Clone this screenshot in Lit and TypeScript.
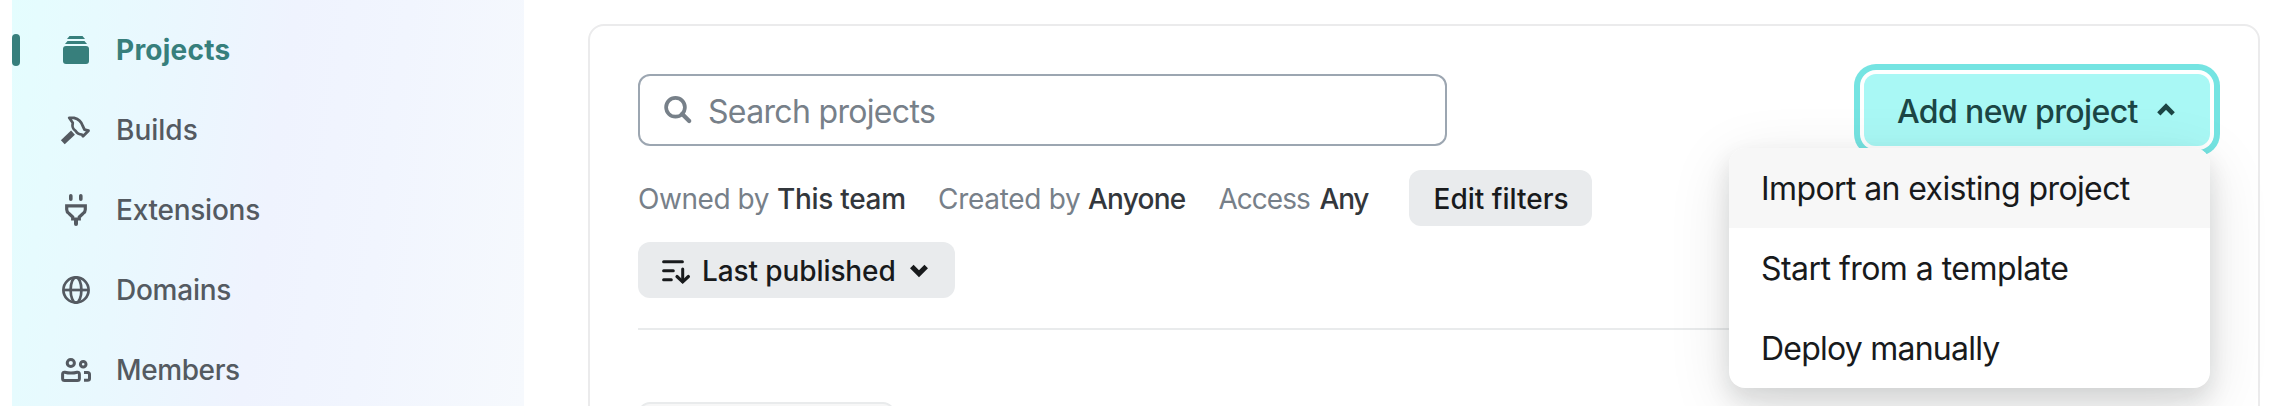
import { LitElement, html, css, svg } from "lit";
import { customElement } from "lit/decorators.js";
import { classMap } from "lit/directives/class-map.js";

const icons = {
  projects: svg`<g fill="currentColor"><path d="M9.500 2h13l2.500 3H7z"/><path d="M7.500 7h17l2.500 3H5z"/><rect x="3" y="12" width="26" height="18" rx="3"/></g>`,
  builds: svg`<path d="M2.800 28.200L13 18.600" stroke="currentColor" stroke-width="5.600"/><path d="M9.200 3.800H14c5 1.400 7.600 4.400 8.600 7.900l1.900 4 4 1-5.500 5.500-1.100-1.600c-3 0-5-1.500-6.300-3.700-3.200-2-3.500-4-2.900-8.200z" fill="none" stroke="currentColor" stroke-width="2.800" stroke-linejoin="round"/>`,
  extensions: svg`<g fill="none" stroke="currentColor"><path d="M10.800 1.800V5.200M20.800 1.800V5.200" stroke-width="3.600" stroke-linecap="round"/><path d="M6.700 11.800H25.300V15.500Q25.300 18 23 19.500L19.300 23V25H12.700V23L9 19.500Q6.700 18 6.700 15.500z" stroke-width="3.200"/><path d="M16 26V30" stroke-width="4" stroke-linecap="round"/></g>`,
  domains: svg`<g fill="none" stroke="currentColor" stroke-width="2.700"><circle cx="16" cy="16" r="12.600"/><ellipse cx="16" cy="16" rx="5.400" ry="12.600"/><path d="M3.400 16h25.200"/></g>`,
  members: svg`<g fill="none" stroke="currentColor" stroke-width="3"><circle cx="10.800" cy="9" r="3.600"/><circle cx="23.200" cy="10.300" r="2.800"/><path d="M4.800 18.200Q11 19.800 17.200 18.200Q19.400 17.900 19.400 20.200V24.500Q19.400 26.500 17.400 26.500H4.600Q2.600 26.500 2.600 24.500V20.200Q2.600 17.900 4.800 18.200z"/><path d="M24 18.600h3.500q2 0 2 2v3.900q0 1.800-2 1.800H24"/></g>`,
};

const nav = [
  { label: "Projects", icon: icons.projects, cls: "projects" },
  { label: "Builds", icon: icons.builds, cls: "builds" },
  { label: "Extensions", icon: icons.extensions, cls: "extensions" },
  { label: "Domains", icon: icons.domains, cls: "domains" },
  { label: "Members", icon: icons.members, cls: "members" },
];

@customElement("side-nav")
class SideNav extends LitElement {
  static styles = css`
    :host {
      display: block;
      box-sizing: border-box;
      height: 406px;
      padding-top: 10px;
      background: linear-gradient(98deg, #e4fdfe 0%, #e9f8fe 25%, #eff3fe 50%, #f1f5fe 70%, #f6f9fd 100%);
    }
    .item {
      display: flex;
      align-items: center;
      height: 80px;
      color: #545a61;
      font-size: 28px;
      font-weight: 500;
      line-height: 40px;
    }
    .bar { width: 8px; height: 32px; border-radius: 4px; margin-right: 40px; }
    .icon { width: 32px; height: 32px; margin-right: 24px; overflow: visible; }
    .active { color: #377f7c; font-weight: 700; }
    .active .bar { background: #377f7c; }
    .projects { letter-spacing: 0.25px; }
    .extensions, .domains { letter-spacing: -0.25px; }
    .members { letter-spacing: -0.4px; }
  `;
  render() {
    return nav.map(
      (n, i) => html`<div class=${classMap({ item: true, active: i === 0, [n.cls]: true })}>
        <span class="bar"></span>
        <svg class="icon" viewBox="0 0 32 32">${n.icon}</svg>
        <span>${n.label}</span>
      </div>`
    );
  }
}

@customElement("add-project")
class AddProject extends LitElement {
  static styles = css`
    :host { display: block; position: relative; width: 346px; }
    .button {
      display: flex;
      align-items: center;
      box-sizing: border-box;
      height: 72px;
      padding-left: 33px;
      border-radius: 12px;
      background: #a9f8f5;
      box-shadow: 0 0 0 4px #fff, 0 0 0 10px #75e4e2;
      color: #1c4645;
      font-size: 32px;
      font-weight: 500;
      letter-spacing: -0.63px;
      white-space: nowrap;
    }
    .label { width: 257px; padding-top: 2px; }
    .chevron { width: 24px; height: 24px; }
    .menu {
      position: absolute;
      top: 74px;
      right: 0;
      width: 481px;
      border-radius: 16px;
      overflow: hidden;
      background: #fff;
      box-shadow: 0 12px 24px rgba(14, 22, 22, 0.12), 0 16px 64px rgba(14, 22, 22, 0.11);
      color: #181a1c;
      font-size: 32px;
    }
    .option { height: 80px; line-height: 82px; padding-left: 32px; white-space: nowrap; }
    .highlighted { background: #f7f7f7; letter-spacing: -0.61px; }
    .template { letter-spacing: -0.54px; }
    .manual { letter-spacing: -0.77px; }
  `;
  render() {
    return html`<div class="button">
        <span class="label">Add new project</span>
        <svg class="chevron" viewBox="0 0 24 24"><path d="M4.800 15.800L12 8.600l7.200 7.200" fill="none" stroke="currentColor" stroke-width="4.600"/></svg>
      </div>
      <div class="menu">
        <div class="option highlighted">Import an existing project</div>
        <div class="option template">Start from a template</div>
        <div class="option manual">Deploy manually</div>
      </div>`;
  }
}

@customElement("app-root")
class AppRoot extends LitElement {
  static styles = css`
    :host {
      display: grid;
      grid-template-columns: 512px 1672px;
      column-gap: 64px;
      box-sizing: border-box;
      height: 406px;
      padding-left: 12px;
      overflow: hidden;
      background: #fff;
      font-family: Inter, sans-serif;
    }
    .card {
      box-sizing: border-box;
      height: 900px;
      margin-top: 24px;
      padding: 48px 48px 0;
      border: 2px solid #ebebec;
      border-radius: 16px;
    }
    .top { display: flex; justify-content: space-between; }
    .search {
      display: flex;
      align-items: center;
      gap: 14px;
      box-sizing: border-box;
      width: 809px;
      height: 72px;
      padding-left: 22px;
      border: 2px solid #9ca6b1;
      border-radius: 12px;
      color: #778089;
      font-size: 32px;
      letter-spacing: -0.67px;
    }
    .placeholder { padding-top: 2px; }
    .lens { width: 32px; height: 32px; }
    .filters {
      display: grid;
      grid-template-columns: 300px 280.5px 190.5px max-content;
      align-items: center;
      margin-top: 24px;
      font-size: 28px;
      line-height: 58px;
      color: #778089;
      white-space: nowrap;
    }
    .filter { display: flex; height: 56px; }
    .value { color: #33373c; font-weight: 500; }
    .owner { letter-spacing: -0.45px; }
    .owner .name { width: 139px; }
    .owner .value { letter-spacing: -0.3px; }
    .creator { letter-spacing: -0.3px; }
    .creator .name { width: 150px; }
    .creator .value { letter-spacing: -0.75px; }
    .access { letter-spacing: -1px; }
    .access .name { width: 101px; }
    .access .value { letter-spacing: -1.2px; }
    .pill {
      display: flex;
      align-items: center;
      box-sizing: border-box;
      height: 56px;
      padding: 0 24px;
      border-radius: 12px;
      background: #e9ebed;
      color: #181a1c;
      font-size: 28px;
      font-weight: 500;
      line-height: 40px;
      white-space: nowrap;
    }
    .edit { width: 183px; padding: 2px 0 0 24.5px; }
    .sort { width: 317px; margin-top: 16px; padding: 0 22px; }
    .sorticon { width: 32px; height: 32px; margin-right: 10px; }
    .sortlabel { width: 205px; padding-top: 2px; letter-spacing: -0.1px; }
    .chevron { width: 24px; height: 24px; }
    .rule { height: 2px; margin-top: 30px; background: #e9ebec; }
    .tile {
      box-sizing: border-box;
      width: 257px;
      height: 160px;
      margin-top: 72px;
      border: 2px solid #e9ebec;
      border-radius: 12px;
      background: #f7f7f7;
    }
  `;
  render() {
    return html`<side-nav></side-nav>
      <main class="card">
        <div class="top">
          <div class="search">
            <svg class="lens" viewBox="0 0 32 32" fill="none" stroke="currentColor"><circle cx="13.500" cy="13.300" r="9.400" stroke-width="3.700"/><path d="M20.200 20L27.200 27" stroke-width="4.200" stroke-linecap="round"/></svg>
            <span class="placeholder">Search projects</span>
          </div>
          <add-project></add-project>
        </div>
        <div class="filters">
          <div class="filter owner"><span class="name">Owned by</span><span class="value">This team</span></div>
          <div class="filter creator"><span class="name">Created by</span><span class="value">Anyone</span></div>
          <div class="filter access"><span class="name">Access</span><span class="value">Any</span></div>
          <div class="pill edit">Edit filters</div>
        </div>
        <div class="pill sort">
          <svg class="sorticon" viewBox="0 0 32 32" fill="none" stroke="currentColor" stroke-width="3" stroke-linecap="round"><path d="M3.600 7.700H22.400M3.600 16.700H13.300M3.600 25.800H11.300M22.700 15V27.500"/><path d="M17 22.500L22.700 27.800L28.400 22.500" stroke-width="3.200"/></svg>
          <span class="sortlabel">Last published</span>
          <svg class="chevron" viewBox="0 0 24 24"><path d="M4.800 8.600L12 15.800l7.200-7.200" fill="none" stroke="currentColor" stroke-width="5"/></svg>
        </div>
        <div class="rule"></div>
        <div class="tile"></div>
      </main>`;
  }
}
